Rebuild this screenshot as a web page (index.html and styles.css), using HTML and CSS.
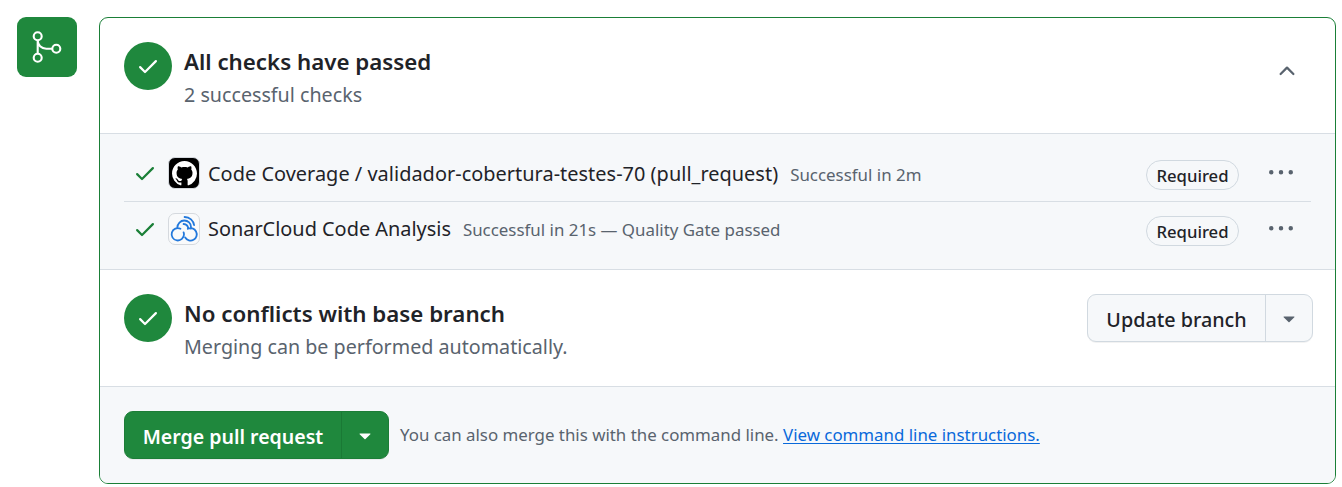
FILE: index.html
```
<!DOCTYPE html>
<html lang="en">
<head>
<meta charset="utf-8">
<title>Merge pull request</title>
<link rel="stylesheet" href="styles.css">
</head>
<body>
<svg width="0" height="0" class="defs" aria-hidden="true">
  <symbol id="check" viewBox="0 0 16 16"><path d="M13.78 4.22a.75.75 0 0 1 0 1.06l-7.25 7.25a.75.75 0 0 1-1.06 0L2.22 9.28a.751.751 0 0 1 .018-1.042.751.751 0 0 1 1.042-.018L6 10.94l6.72-6.72a.75.75 0 0 1 1.06 0Z"/></symbol>
  <symbol id="kebab" viewBox="0 0 16 16"><path d="M8 9a1.5 1.5 0 1 0 0-3 1.5 1.5 0 0 0 0 3ZM1.5 9a1.5 1.5 0 1 0 0-3 1.5 1.5 0 0 0 0 3Zm13 0a1.5 1.5 0 1 0 0-3 1.5 1.5 0 0 0 0 3Z"/></symbol>
  <symbol id="caret" viewBox="0 0 16 16"><path d="m4.427 7.427 3.396 3.396a.25.25 0 0 0 .354 0l3.396-3.396A.25.25 0 0 0 11.396 7H4.604a.25.25 0 0 0-.177.427Z"/></symbol>
</svg>
<main class="merge">
  <div class="badge">
    <svg class="merge-icon" viewBox="0 0 36 36"><circle cx="8.700" cy="7.200" r="4"/><circle cx="8.700" cy="28.700" r="4"/><circle cx="27.300" cy="19.700" r="4"/><path d="M8.700 11.200V24.700M8.700 11.200c0 5 3.600 8.500 8.600 8.500h6"/></svg>
  </div>
  <div class="card">
    <section class="summary">
      <span class="status"><svg class="icon"><use href="#check"/></svg></span>
      <div class="text"><h3 class="title">All checks have passed</h3><p class="sub">2 successful checks</p></div>
      <svg class="icon chevron" viewBox="0 0 16 16"><path d="M3.22 10.53a.749.749 0 0 1 0-1.06l4.25-4.25a.749.749 0 0 1 1.06 0l4.25 4.25a.749.749 0 1 1-1.06 1.06L8 6.811 4.28 10.53a.749.749 0 0 1-1.06 0Z"/></svg>
    </section>
    <section class="checks">
      <div class="check">
        <svg class="icon passed"><use href="#check"/></svg>
        <span class="avatar dark"><svg class="github" viewBox="0 0 16 16"><path d="M8 0c4.42 0 8 3.58 8 8a8.013 8.013 0 0 1-5.45 7.59c-.4.08-.55-.17-.55-.38 0-.27.01-1.13.01-2.2 0-.75-.25-1.23-.54-1.48 1.78-.2 3.65-.88 3.65-3.95 0-.88-.31-1.59-.82-2.15.08-.2.36-1.02-.08-2.12 0 0-.67-.22-2.2.82-.64-.18-1.32-.27-2-.27-.68 0-1.36.09-2 .27-1.53-1.03-2.2-.82-2.2-.82-.44 1.1-.16 1.92-.08 2.12-.51.56-.82 1.28-.82 2.15 0 3.06 1.86 3.75 3.64 3.95-.23.2-.44.55-.51 1.07-.46.21-1.61.55-2.33-.66-.15-.24-.6-.83-1.23-.82-.67.01-.27.38.01.53.34.19.73.9.82 1.13.16.45.68 1.31 2.69.94 0 .67.01 1.3.01 1.49 0 .21-.15.45-.55.38A7.995 7.995 0 0 1 0 8c0-4.42 3.58-8 8-8Z"/></svg></span>
        <p class="label"><span class="name">Code Coverage / validador-cobertura-testes-70 (pull_request)</span><span class="result">Successful in 2m</span></p>
        <span class="pill">Required</span>
        <svg class="icon kebab"><use href="#kebab"/></svg>
      </div>
      <div class="check">
        <svg class="icon passed"><use href="#check"/></svg>
        <span class="avatar"><svg class="sonar" viewBox="0 0 30 30"><path d="M11.500 14.700A6.200 6.200 0 1 0 15 20.200L14.600 18.300M8.300 13.600C8.500 9.500 11.500 6.500 15.200 6.500c4 0 6.800 2.900 6.800 6.500 0 .6-.1 1.100-.3 1.600M18.800 14.800A6.200 6.200 0 1 1 16.200 23.500M14.600 10c2.600.2 4.300 1.900 4.600 4.300M15.600 3c5 .1 8.900 3.400 9.500 8.200"/></svg></span>
        <p class="label"><span class="name">SonarCloud Code Analysis</span><span class="result">Successful in 21s — Quality Gate passed</span></p>
        <span class="pill">Required</span>
        <svg class="icon kebab"><use href="#kebab"/></svg>
      </div>
    </section>
    <section class="summary">
      <span class="status"><svg class="icon"><use href="#check"/></svg></span>
      <div class="text"><h3 class="title">No conflicts with base branch</h3><p class="sub">Merging can be performed automatically.</p></div>
      <div class="split"><button class="action">Update branch</button><button class="more" aria-label="More options"><svg class="icon"><use href="#caret"/></svg></button></div>
    </section>
    <section class="footer">
      <div class="split primary"><button class="action">Merge pull request</button><button class="more" aria-label="Select merge method"><svg class="icon"><use href="#caret"/></svg></button></div>
      <p class="hint">You can also merge this with the command line. <a class="link" href="#">View command line instructions.</a></p>
    </section>
  </div>
</main>
</body>
</html>
```
FILE: styles.css
```
* { box-sizing: border-box; }
body { margin: 0; background: #fff; color: #1f2328; font-family: "Noto Sans", sans-serif; }
h3, p { margin: 0; }
button { margin: 0; padding: 0; border: 0; background: none; color: inherit; font: inherit; }
.defs { display: none; }
.icon { display: block; flex: none; width: 24px; height: 24px; fill: currentColor; }

.merge { display: flex; align-items: flex-start; gap: 22px; padding: 17px 6px 0 17px; }
.badge { display: flex; align-items: center; justify-content: center; flex: none; width: 60px; height: 60px; border-radius: 9px; background: #1f883d; }
.merge-icon { width: 36px; height: 36px; fill: none; stroke: #fff; stroke-width: 2.1; }
.card { flex: 1; height: 467px; overflow: hidden; border: 1px solid #1a7f37; border-radius: 9px; white-space: nowrap; }

.summary { display: flex; align-items: flex-start; height: 116px; padding: 24px; border-bottom: 1px solid #d8dee4; }
.checks + .summary { height: 117px; padding-right: 22px; }
.status { display: flex; align-items: center; justify-content: center; flex: none; width: 48px; height: 48px; border-radius: 50%; background: #1f883d; color: #fff; }
.text { flex: 1; padding: 4px 0 0 12px; }
.title { font-size: 22.3px; line-height: 32px; font-weight: 600; }
.sub { color: #59636e; font-size: 19.7px; line-height: 33px; }
.chevron { margin: 17px 12px 0 0; color: #59636e; }

.checks { height: 136px; padding: 11px 24px 0; border-bottom: 1px solid #d8dee4; background: #f6f8fa; }
.check { display: flex; align-items: center; height: 54px; padding: 0 18px 0 9px; }
.check:first-child { height: 57px; border-bottom: 1px solid #d8dee4; }
.check:first-child .name { letter-spacing: .035px; }
.check:first-child .label { padding-top: 1px; }
.passed { color: #1a7f37; }
.avatar { display: flex; align-items: center; justify-content: center; flex: none; width: 32px; height: 32px; margin: 0 8px 0 11px; border: 1px solid #d5d9de; border-radius: 7px; background: #f9fafb; }
.dark { background: #000; }
.github { width: 25px; height: 25px; fill: #fff; }
.sonar { width: 30px; height: 30px; fill: none; stroke: #2379dc; stroke-width: 1.8; stroke-linecap: round; }
.label { display: flex; align-items: baseline; flex: 1; gap: 12px; }
.name { font-size: 19.9px; line-height: 30px; }
.result { color: #59636e; font-size: 16.9px; }
.pill { width: 93px; height: 30px; margin-top: 4px; border: 1px solid #d1d9e0; border-radius: 15px; font-size: 16.7px; line-height: 29px; font-weight: 500; text-align: center; }
.kebab { margin-left: 30px; color: #59636e; }

.split { display: flex; height: 48px; border: 1px solid #d1d9e0; border-radius: 9px; background: #f6f8fa; box-shadow: 0 1px 0 rgba(31, 35, 40, .06); }
.action { width: 177px; font-size: 19.75px; line-height: 49px; font-weight: 500; }
.more { display: flex; align-items: center; justify-content: center; width: 47px; border-left: 1px solid #d1d9e0; color: #59636e; }
.primary { border-color: #1c7d37; background: #1f883d; color: #fff; }
.primary .action { width: 216px; font-size: 19.55px; font-weight: 600; }
.primary .more { border-color: #1a7935; color: #fff; }

.footer { display: flex; height: 97px; padding: 24px; background: #f6f8fa; }
.hint { margin-left: 11px; color: #59636e; font-size: 16.87px; line-height: 48px; }
.link { color: #0969da; text-decoration: underline; text-underline-offset: 2px; text-decoration-thickness: 1px; }
```
